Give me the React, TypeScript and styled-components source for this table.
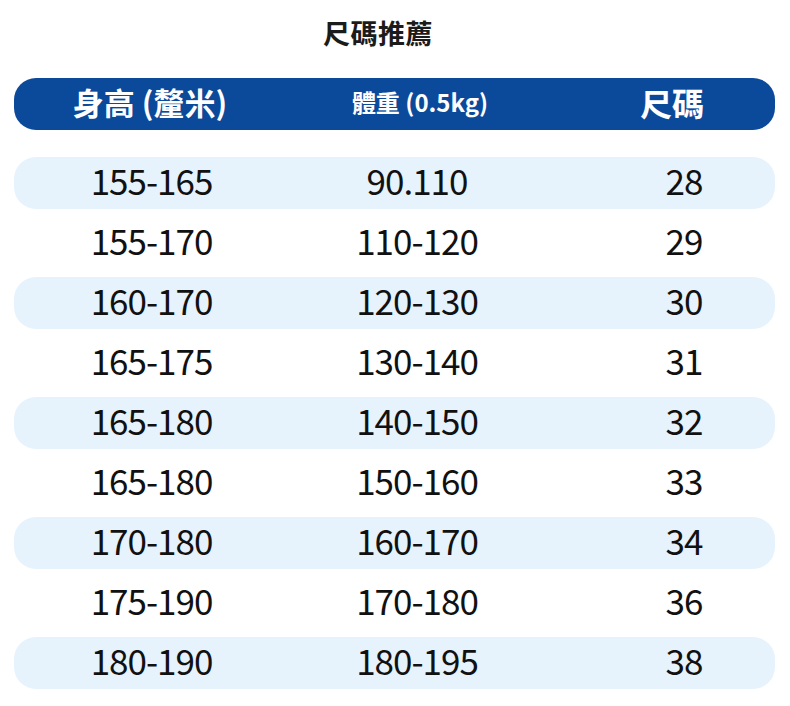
import React from 'react'
import styled, { createGlobalStyle } from 'styled-components'

const GlobalStyle = createGlobalStyle`
  html, body {
    margin: 0;
    padding: 0;
    background: #ffffff;
  }
  body {
    font-family: "Noto Sans CJK TC", "Noto Sans", sans-serif;
    color: #111111;
  }
`

const Page = styled.div`
  width: 790px;
  padding: 0 15px 0 14px;
  box-sizing: border-box;
`

const Title = styled.h1`
  margin: 0;
  height: 78px;
  padding-right: 33px;
  line-height: 66px;
  text-align: center;
  font-size: 27px;
  font-weight: 700;
  color: #1b1b1b;
  letter-spacing: 0.5px;
`

const HeaderBar = styled.div`
  display: grid;
  grid-template-columns: 272px 268px 236px;
  align-items: center;
  height: 52px;
  border-radius: 22px;
  background: #0b4a9b;
  color: #ffffff;
  font-weight: 700;
`

const HeadCell = styled.div<{ $size: number }>`
  text-align: center;
  font-size: ${(p) => p.$size}px;
  line-height: 48px;
  padding-bottom: 4px;
  white-space: nowrap;
`

const Rows = styled.div`
  display: flex;
  flex-direction: column;
  gap: 8px;
  margin-top: 27px;
`

const Row = styled.div<{ $striped: boolean }>`
  display: grid;
  grid-template-columns: 275px 256px 278px;
  align-items: center;
  height: 52px;
  border-radius: 22px;
  background: ${(p) => (p.$striped ? '#e6f3fd' : 'transparent')};
`

const Cell = styled.div`
  text-align: center;
  font-size: 35px;
  letter-spacing: -1px;
  line-height: 46px;
  padding-bottom: 6px;
  white-space: nowrap;
  color: #111111;
`

const data: [string, string, string][] = [
  ['155-165', '90.110', '28'],
  ['155-170', '110-120', '29'],
  ['160-170', '120-130', '30'],
  ['165-175', '130-140', '31'],
  ['165-180', '140-150', '32'],
  ['165-180', '150-160', '33'],
  ['170-180', '160-170', '34'],
  ['175-190', '170-180', '36'],
  ['180-190', '180-195', '38'],
]

export default function App() {
  return (
    <>
      <GlobalStyle />
      <Page>
        <Title>尺碼推薦</Title>
        <HeaderBar>
          <HeadCell $size={31}>身高 (釐米)</HeadCell>
          <HeadCell $size={24}>體重 (0.5kg)</HeadCell>
          <HeadCell $size={32}>尺碼</HeadCell>
        </HeaderBar>
        <Rows>
          {data.map((r, i) => (
            <Row key={i} $striped={i % 2 === 0}>
              <Cell>{r[0]}</Cell>
              <Cell>{r[1]}</Cell>
              <Cell>{r[2]}</Cell>
            </Row>
          ))}
        </Rows>
      </Page>
    </>
  )
}
